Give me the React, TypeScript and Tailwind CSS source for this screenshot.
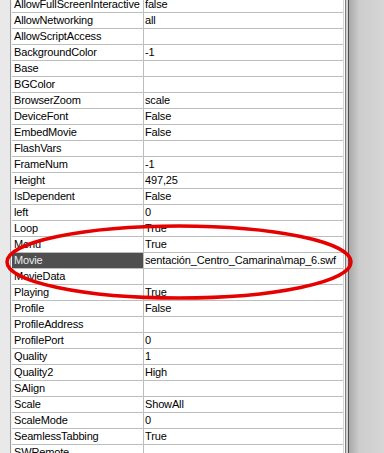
import React from 'react';

type Prop = { name: string; value?: string; selected?: boolean };

const props: Prop[] = [
  { name: 'AllowFullScreenInteractive', value: 'false' },
  { name: 'AllowNetworking', value: 'all' },
  { name: 'AllowScriptAccess' },
  { name: 'BackgroundColor', value: '-1' },
  { name: 'Base' },
  { name: 'BGColor' },
  { name: 'BrowserZoom', value: 'scale' },
  { name: 'DeviceFont', value: 'False' },
  { name: 'EmbedMovie', value: 'False' },
  { name: 'FlashVars' },
  { name: 'FrameNum', value: '-1' },
  { name: 'Height', value: '497,25' },
  { name: 'IsDependent', value: 'False' },
  { name: 'left', value: '0' },
  { name: 'Loop', value: 'True' },
  { name: 'Menu', value: 'True' },
  { name: 'Movie', value: 'sentación_Centro_Camarina\\map_6.swf', selected: true },
  { name: 'MovieData' },
  { name: 'Playing', value: 'True' },
  { name: 'Profile', value: 'False' },
  { name: 'ProfileAddress' },
  { name: 'ProfilePort', value: '0' },
  { name: 'Quality', value: '1' },
  { name: 'Quality2', value: 'High' },
  { name: 'SAlign' },
  { name: 'Scale', value: 'ShowAll' },
  { name: 'ScaleMode', value: '0' },
  { name: 'SeamlessTabbing', value: 'True' },
  { name: 'SWRemote' },
];

const Row: React.FC<{ prop: Prop }> = ({ prop }) => (
  <div className="flex h-[16px] border-b border-[#bdbdbd]">
    <div
      className={
        prop.selected
          ? 'w-[131px] pl-[2px] bg-[#4f4f4f] text-[#ececec] leading-[15px] whitespace-nowrap overflow-hidden'
          : 'w-[131px] pl-[2px] text-black leading-[15px] whitespace-nowrap overflow-hidden'
      }
    >
      {prop.name}
    </div>
    <div className="w-[1px] bg-[#bdbdbd]" />
    <div className="w-[199px] pl-[1px] text-black leading-[15px] whitespace-nowrap overflow-hidden">
      {prop.value}
    </div>
  </div>
);

export default function App() {
  return (
    <div className="relative w-[384px] h-[453px] overflow-hidden bg-white font-['Liberation_Sans',Arial,sans-serif] text-[11px] tracking-[-0.15px]">
      <div className="flex h-full">
        <div className="w-[10px] bg-[#e9e9e9]" />
        <div className="w-[1px] bg-[#9c9c9c]" />
        <div className="w-[1px] bg-[#f4f4f4]" />
        <div className="w-[331px] -mt-[3px]">
          {props.map((p) => (
            <Row key={p.name} prop={p} />
          ))}
        </div>
        <div className="w-[1px] bg-[#d4d4d4]" />
        <div className="w-[1px] bg-white" />
        <div className="w-[1px] bg-[#7c7c7c]" />
        <div className="w-[2px] bg-[#d2d2d2]" />
        <div className="w-[1px] bg-[#4e4e4e]" />
        <div className="flex-1 bg-gradient-to-r from-[#a9a9a9] via-[#cdcdcd] via-30% to-[#d6d6d6]" />
      </div>
      <svg className="absolute inset-0 pointer-events-none" width="384" height="453">
        <ellipse cx="179" cy="262" rx="172" ry="36" fill="none" stroke="#e60000" strokeWidth="3.5" />
      </svg>
    </div>
  );
}
